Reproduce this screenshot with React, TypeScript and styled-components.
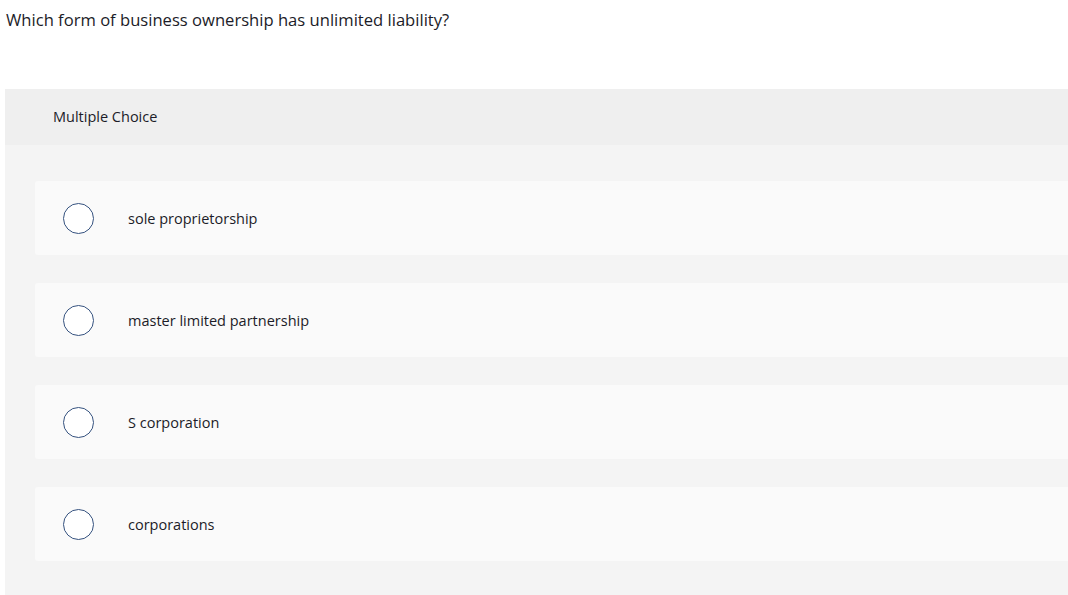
import React from 'react';
import styled, { createGlobalStyle } from 'styled-components';

const GlobalStyle = createGlobalStyle`
  html, body {
    margin: 0;
    padding: 0;
    background: #ffffff;
    overflow: hidden;
  }
  body {
    font-family: "Open Sans", Lato, sans-serif;
    color: #1c1c28;
  }
`;

const options = ['sole proprietorship', 'master limited partnership', 'S corporation', 'corporations'];

const App = () => {
  return (
    <Page>
      <GlobalStyle />
      <Question>Which form of business ownership has unlimited liability?</Question>
      <Panel>
        <PanelHeader>Multiple Choice</PanelHeader>
        <OptionList>
          {options.map((text) => (
            <Option key={text}>
              <Radio />
              <OptionText>{text}</OptionText>
            </Option>
          ))}
        </OptionList>
      </Panel>
    </Page>
  );
};

export default App;

const Page = styled.div`
  width: 1068px;
  padding: 9px 0 0 5px;
  box-sizing: border-box;
`;

const Question = styled.div`
  font-size: 16.6px;
  line-height: 22px;
  color: #1c1c28;
  padding-left: 1px;
`;

const Panel = styled.div`
  margin-top: 58px;
  background: #f4f4f4;
`;

const PanelHeader = styled.div`
  height: 56px;
  display: flex;
  align-items: center;
  padding-left: 48px;
  padding-bottom: 1px;
  box-sizing: border-box;
  background: #efefef;
  font-size: 14.5px;
  color: #1c1c28;
`;

const OptionList = styled.div`
  display: flex;
  flex-direction: column;
  gap: 28px;
  padding: 36px 0 36px 30px;
`;

const Option = styled.div`
  height: 74px;
  display: flex;
  align-items: center;
  padding-left: 28px;
  background: #fafafa;
  border-radius: 3px 0 0 3px;
`;

const Radio = styled.span`
  width: 29px;
  height: 29px;
  border: 1.6px solid #35527f;
  border-radius: 50%;
  background: #ffffff;
  flex-shrink: 0;
`;

const OptionText = styled.span`
  margin-left: 34px;
  font-size: 14.5px;
  color: #1c1c28;
`;
